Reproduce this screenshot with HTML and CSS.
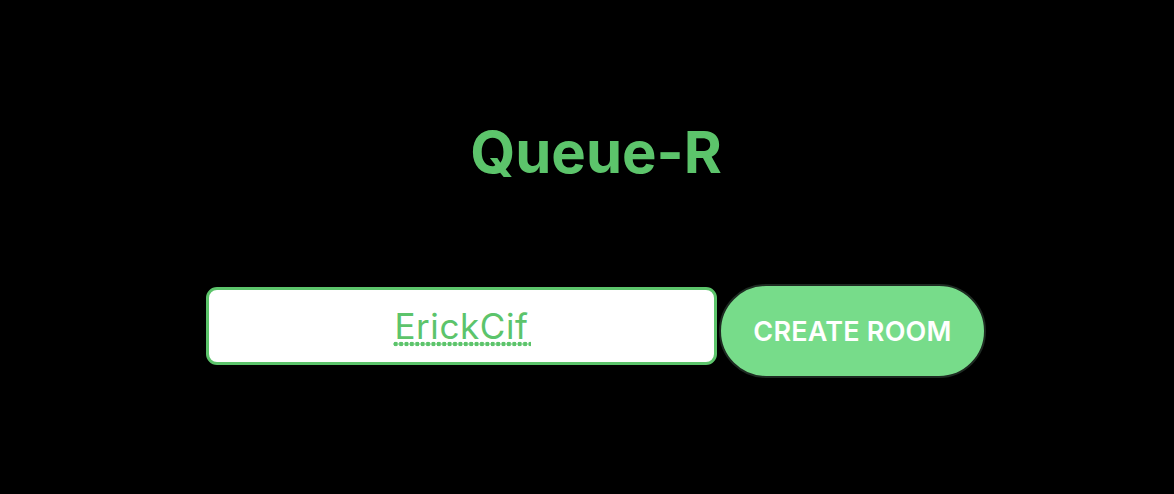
FILE: index.html
```html
<!DOCTYPE html>
<html>
<head>
<meta charset="utf-8">
<link rel="stylesheet" href="styles.css">
</head>
<body>
<main class="page">
  <h1 class="title">Queue-R</h1>
  <form class="room-form">
    <div class="name-field"><span class="name-text">ErickCif</span></div>
    <button type="button" class="create-btn">CREATE ROOM</button>
  </form>
</main>
</body>
</html>
```
FILE: styles.css
```css
html, body {
  margin: 0;
  padding: 0;
  background: #000;
  height: 100%;
}
body {
  font-family: Inter, "Noto Sans", sans-serif;
}
.page {
  display: flex;
  flex-direction: column;
  align-items: center;
  padding-left: 18px;
}
.title {
  margin: 0;
  margin-top: 117px;
  font-size: 58px;
  font-weight: 700;
  color: #5cc46b;
  line-height: 70px;
}
.room-form {
  margin-top: 97px;
  display: flex;
  align-items: flex-start;
  gap: 2px;
}
.name-field {
  margin-top: 3px;
  box-sizing: border-box;
  width: 511px;
  height: 78px;
  border: 3px solid #5cc46b;
  border-radius: 11px;
  background: #fff;
  display: flex;
  align-items: center;
  justify-content: center;
}
.name-text {
  position: relative;
  font-size: 35px;
  letter-spacing: 0.6px;
  color: #5cc46b;
  line-height: 42px;
}
.name-text::after {
  content: "";
  position: absolute;
  left: -1px;
  right: -2px;
  bottom: 0;
  height: 6px;
  background-image: radial-gradient(circle, #5cc46b 2px, transparent 2.6px);
  background-size: 5.4px 6px;
  background-repeat: repeat-x;
}
.create-btn {
  box-sizing: border-box;
  width: 267px;
  height: 94px;
  border: 2px solid #1e2a22;
  border-radius: 47px;
  background: #77dc8a;
  color: #fff;
  font-family: Inter, "Noto Sans", sans-serif;
  font-size: 27px;
  font-weight: 600;
  letter-spacing: 0.2px;
  padding: 0;
}
```
